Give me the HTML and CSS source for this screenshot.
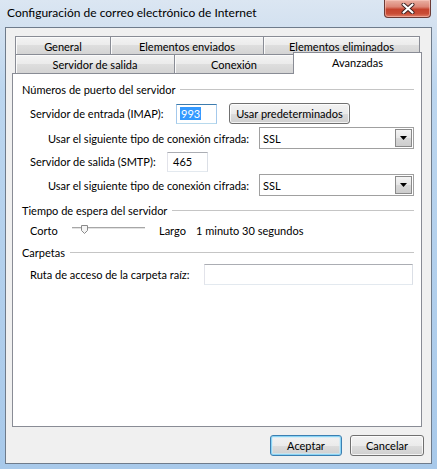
FILE: index.html
```html
<!DOCTYPE html>
<html lang="es">
<head>
<meta charset="utf-8">
<title>Configuración de correo electrónico de Internet</title>
<link rel="stylesheet" href="styles.css">
</head>
<body>
<div class="window">
  <div class="titlebar">
    <span class="title">Configuración de correo electrónico de Internet</span>
    <div class="close">
      <svg width="14" height="11" viewBox="0 0 14 11">
        <path d="M2.5 1.5 L11.5 9.5 M11.5 1.5 L2.5 9.5" stroke="#3a2020" stroke-width="4" stroke-linecap="round"/>
        <path d="M2.5 1.5 L11.5 9.5 M11.5 1.5 L2.5 9.5" stroke="#ffffff" stroke-width="2.2" stroke-linecap="round"/>
      </svg>
    </div>
  </div>
  <div class="client">
    <div class="tabs">
      <div class="tabrow back">
        <div class="tab t-general">General</div>
        <div class="tab t-enviados">Elementos enviados</div>
        <div class="tab t-eliminados">Elementos eliminados</div>
      </div>
      <div class="tabrow front">
        <div class="tab t-salida">Servidor de salida</div>
        <div class="tab t-conexion">Conexión</div>
        <div class="tab t-avanzadas selected">Avanzadas</div>
      </div>
    </div>
    <div class="panel">
      <div class="group g1"><span>Números de puerto del servidor</span><div class="line"></div></div>
      <div class="row r-imap">
        <span class="lbl l-imap">Servidor de entrada (IMAP):</span>
        <div class="input focused w-port"><span class="sel">993</span></div>
        <button class="btn b-default-vals">Usar predeterminados</button>
      </div>
      <div class="row sub r-sel1">
        <span class="lbl l-cifrada">Usar el siguiente tipo de conexión cifrada:</span>
        <div class="select"><span>SSL</span><div class="arrow"><svg width="7" height="4" viewBox="0 0 7 4"><path d="M0 0H7L3.5 4Z" fill="#000"/></svg></div></div>
      </div>
      <div class="row r-smtp">
        <span class="lbl l-smtp">Servidor de salida (SMTP):</span>
        <div class="input w-port"><span>465</span></div>
      </div>
      <div class="row sub r-sel2">
        <span class="lbl l-cifrada">Usar el siguiente tipo de conexión cifrada:</span>
        <div class="select"><span>SSL</span><div class="arrow"><svg width="7" height="4" viewBox="0 0 7 4"><path d="M0 0H7L3.5 4Z" fill="#000"/></svg></div></div>
      </div>
      <div class="group g2"><span>Tiempo de espera del servidor</span><div class="line"></div></div>
      <div class="row slider-row">
        <span class="lbl l-corto">Corto</span>
        <svg class="slider" width="73" height="16" viewBox="0 0 73 16">
          <rect x="0" y="5" width="73" height="1" fill="#a7a7a7"/>
          <rect x="0" y="6" width="73" height="1" fill="#e3e3e3"/>
          <path d="M9.5 3.5 H15.5 V8.5 L12.5 11.5 L9.5 8.5 Z" fill="#f4f4f4" stroke="#8a8a8a"/>
        </svg>
        <span class="lbl l-largo">Largo</span>
        <span>1 minuto 30 segundos</span>
      </div>
      <div class="group g3"><span>Carpetas</span><div class="line"></div></div>
      <div class="row r-ruta">
        <span class="lbl l-ruta">Ruta de acceso de la carpeta raíz:</span>
        <div class="input w-ruta"></div>
      </div>
    </div>
    <div class="footer">
      <button class="btn default b-ok">Aceptar</button>
      <button class="btn b-cancel">Cancelar</button>
    </div>
  </div>
</div>
</body>
</html>
```
FILE: styles.css
```css
* { box-sizing: border-box; }
html, body { margin: 0; padding: 0; }
body {
  width: 437px;
  height: 469px;
  overflow: hidden;
  font-family: Lato, "Noto Sans", sans-serif;
  font-size: 11px;
  color: #000;
}
.window {
  width: 437px;
  height: 469px;
  display: flex;
  flex-direction: column;
  background: linear-gradient(to bottom, #dbe6f2 0, #d3e1f0 27px, #bcd6ef 90px, #a8c9ea 100%);
}
.titlebar {
  height: 27px;
  display: flex;
  justify-content: space-between;
  align-items: flex-start;
  padding-left: 7px;
}
.title {
  margin-top: 5px;
  font-size: 12px;
  line-height: 16px;
}
.close {
  width: 47px;
  height: 18px;
  margin-right: 6px;
  border: 1px solid #6b3a35;
  border-top: none;
  border-radius: 0 0 4px 4px;
  background: linear-gradient(to bottom, #eab1a4 0, #dc8676 40%, #c5432d 55%, #c94d36 80%, #e0806a 100%);
  box-shadow: inset 0 0 0 1px rgba(255, 210, 200, 0.5);
  display: flex;
  align-items: center;
  justify-content: center;
}
.client {
  flex: 1;
  margin: 0 5px 5px 5px;
  border: 1px solid #6e7b8b;
  background: #f0f0f0;
  display: flex;
  flex-direction: column;
}
.tabs {
  padding: 8px 0 0 9px;
}
.tabrow {
  display: flex;
}
.tabrow.back { height: 18px; }
.tabrow.front { height: 19px; align-items: flex-end; }
.tab {
  height: 100%;
  margin-left: -1px;
  border: 1px solid #898c95;
  border-bottom: none;
  background: linear-gradient(to bottom, #f3f3f3 0, #ebebeb 50%, #dedede 50%, #d4d4d4 100%);
  box-shadow: inset 1px 1px 0 #fbfbfb;
  text-align: center;
  line-height: 16px;
  padding-top: 2px;
  white-space: nowrap;
}
.tab:first-child { margin-left: 0; }
.t-general { width: 96px; }
.t-enviados { width: 154px; }
.t-eliminados { width: 157px; }
.t-salida { width: 160px; }
.t-conexion { width: 120px; }
.t-avanzadas { width: 129px; }
.tab.selected {
  height: 22px;
  margin-bottom: -1px;
  background: #fff;
  box-shadow: none;
  position: relative;
  z-index: 1;
}
.panel {
  width: 410px;
  height: 354px;
  margin-left: 6px;
  border: 1px solid #898c95;
  background: #fff;
  padding: 7px 7px 0 9px;
  display: flex;
  flex-direction: column;
}
.group {
  height: 16px;
  display: flex;
  align-items: center;
  white-space: nowrap;
}
.group .line {
  flex: 1;
  height: 1px;
  margin-left: 5px;
  background: #c5c5c5;
}
.g2 { margin-top: 6px; }
.g3 { margin-top: 6px; }
.row {
  display: flex;
  align-items: center;
  height: 21px;
  padding-left: 8px;
  white-space: nowrap;
}
.row.sub { padding-left: 26px; height: 22px; }
.r-imap { margin-top: 6px; }
.r-sel1 { margin-top: 3px; }
.r-smtp { margin-top: 2px; }
.r-sel2 { margin-top: 2px; }
.slider-row { height: 16px; margin-top: 4px; }
.r-ruta { margin-top: 4px; }
.lbl { flex: none; }
.l-imap { width: 146px; }
.l-smtp { width: 137px; }
.l-cifrada { width: 211px; }
.l-ruta { width: 174px; }
.l-corto { width: 42px; }
.l-largo { width: 37px; margin-left: 14px; }
.slider { flex: none; display: block; }
.input {
  height: 20px;
  border: 1px solid;
  border-color: #abadb3 #dbdfe6 #e3e9ef #e2e3ea;
  background: #fff;
  display: flex;
  align-items: center;
  padding-left: 5px;
}
.input.focused {
  border-color: #3d7bad #a4c9ec #b7d9ed #a4c9ec;
  padding-left: 3px;
}
.w-port { width: 41px; }
.w-ruta { width: 209px; height: 21px; }
.sel {
  background: #3399ff;
  color: #fff;
  line-height: 13px;
  padding: 0 1px;
}
.select {
  width: 155px;
  height: 22px;
  border: 1px solid #a0a0a0;
  background: #fff;
  display: flex;
  align-items: center;
  justify-content: space-between;
  padding: 0 1px 0 3px;
}
.arrow {
  width: 17px;
  height: 18px;
  border: 1px solid #8a8a8a;
  background: linear-gradient(to bottom, #f4f4f4 0, #e6e6e6 50%, #d8d8d8 51%, #cdcdcd 100%);
  display: flex;
  align-items: center;
  justify-content: center;
}
.arrow svg { display: block; }
.btn {
  height: 21px;
  border: 1px solid #707070;
  border-radius: 3px;
  background: linear-gradient(to bottom, #f2f2f2 0, #ebebeb 50%, #dddddd 50%, #cfcfcf 100%);
  box-shadow: inset 0 0 0 1px rgba(255, 255, 255, 0.75);
  font: inherit;
  color: #000;
  padding: 0;
  text-align: center;
}
.b-default-vals { width: 121px; margin-left: 12px; }
.btn.default {
  border-color: #3c7fb1;
  box-shadow: inset 0 0 0 1px #8ad4f5, inset 0 0 0 2px rgba(200, 235, 250, 0.6);
}
.footer {
  display: flex;
  justify-content: flex-end;
  gap: 8px;
  padding: 8px 7px 0 0;
}
.b-ok { width: 72px; }
.b-cancel { width: 74px; }
```
